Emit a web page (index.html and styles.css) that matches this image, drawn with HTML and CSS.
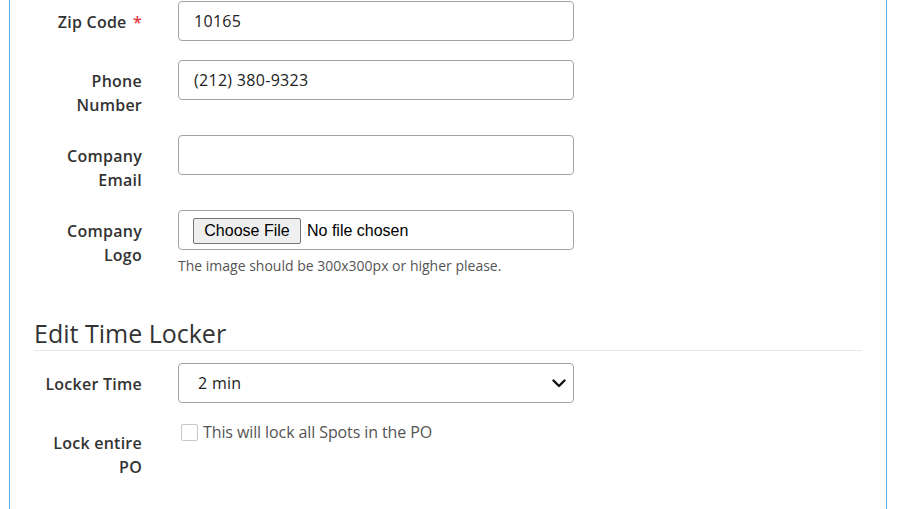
FILE: index.html
```html
<!DOCTYPE html>
<html lang="en">
<head>
<meta charset="utf-8">
<title>Edit Company</title>
<link rel="stylesheet" href="styles.css">
</head>
<body>
<div class="panel">
  <form class="form">
    <div class="row">
      <label class="label">Zip Code <span class="req">*</span></label>
      <div class="field"><div class="input">10165</div></div>
    </div>
    <div class="row">
      <label class="label">Phone Number</label>
      <div class="field"><div class="input">(212) 380-9323</div></div>
    </div>
    <div class="row">
      <label class="label">Company Email</label>
      <div class="field"><div class="input"></div></div>
    </div>
    <div class="row">
      <label class="label">Company Logo</label>
      <div class="field">
        <div class="input file">
          <span class="file-btn">Choose File</span>
          <span class="file-name">No file chosen</span>
        </div>
        <p class="help">The image should be 300x300px or higher please.</p>
      </div>
    </div>

    <h3 class="section">Edit Time Locker</h3>

    <div class="row">
      <label class="label">Locker Time</label>
      <div class="field">
        <div class="input select">
          <span class="select-val">2 min</span>
          <svg class="chev" width="14" height="9" viewBox="0 0 14 9"><path d="M1.5 1.5 L7 7 L12.5 1.5" fill="none" stroke="#111" stroke-width="2.4" stroke-linecap="round" stroke-linejoin="round"/></svg>
        </div>
      </div>
    </div>
    <div class="row">
      <label class="label">Lock entire PO</label>
      <div class="field">
        <div class="check">
          <span class="box"></span>
          <span class="check-text">This will lock all Spots in the PO</span>
        </div>
      </div>
    </div>
  </form>
</div>
</body>
</html>
```
FILE: styles.css
```css
* { box-sizing: border-box; }
html, body { margin: 0; padding: 0; background: #fff; }
body {
  font-family: "Open Sans", "Liberation Sans", sans-serif;
  font-size: 16px;
  color: #333;
  overflow: hidden;
  height: 509px;
}
.panel {
  margin-left: 9px;
  width: 878px;
  height: 509px;
  border-left: 1px solid #5aaae0;
  border-right: 1px solid #5aaae0;
  padding: 1px 24px 0 24px;
}
.form {
  display: flex;
  flex-direction: column;
  margin: 0;
}
.row {
  display: grid;
  grid-template-columns: 108px 396px;
  column-gap: 36px;
  margin-bottom: 19px;
}
.label {
  text-align: right;
  font-weight: 600;
  line-height: 24px;
  padding-top: 9px;
  margin-bottom: -1px;
  color: #333;
  letter-spacing: 0.25px;
}
.req { color: #d9363e; font-weight: 600; margin-left: 2px; }
.input {
  height: 40px;
  border: 1px solid #a3a3a3;
  border-radius: 4px;
  padding: 0 15px;
  display: flex;
  align-items: center;
  color: #222;
  font-size: 16px;
  line-height: 24px;
  letter-spacing: 0.3px;
}
.file { padding-left: 14px; letter-spacing: 0; }
.file-btn {
  font-family: "Liberation Sans", Arial, sans-serif;
  font-size: 16px;
  color: #000;
  background: #efefef;
  border: 1px solid #767676;
  border-radius: 2px;
  height: 26px;
  width: 108px;
  display: flex;
  align-items: center;
  justify-content: center;
  margin-top: 1px;
}
.file-name {
  font-family: "Liberation Sans", Arial, sans-serif;
  font-size: 16px;
  color: #000;
  margin-left: 6px;
  margin-top: 1px;
}
.help {
  margin: 7px 0 0 0;
  font-size: 14px;
  line-height: 18px;
  color: #555;
}
.section {
  margin: 24px 0 12px 0;
  font-size: 25px;
  font-weight: 400;
  line-height: 30px;
  padding-bottom: 2px;
  border-bottom: 1px solid #e5e5e5;
  color: #333;
}
.select { justify-content: space-between; padding-left: 19px; padding-right: 7px; }
.select-val { color: #222; }
.chev { display: block; }
.check {
  display: flex;
  align-items: center;
  margin-top: -2px;
  line-height: 24px;
}
.box {
  width: 17px;
  height: 17px;
  border: 1px solid #c8c8c8;
  border-radius: 2px;
  margin-left: 3px;
  margin-right: 5px;
  background: #fff;
}
.check-text { color: #555; letter-spacing: -0.1px; }
```
